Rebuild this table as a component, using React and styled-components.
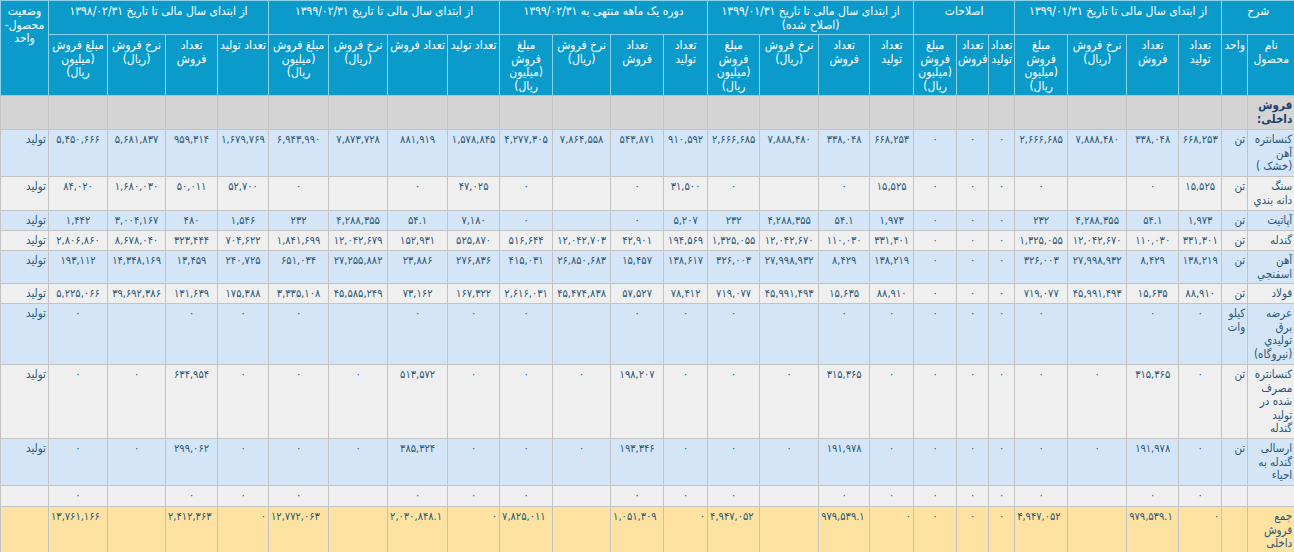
import React from 'react';
import styled, { createGlobalStyle } from 'styled-components';

const GlobalStyle = createGlobalStyle`
  body {
    margin: 0;
    background: #ffffff;
    font-family: "DejaVu Sans Condensed", "DejaVu Sans", sans-serif;
  }
`;

const colors = {
  head: '#0a9bcb',
  headLine: '#8fd2ec',
  line: '#c3c3c3',
  text: '#2b5878',
  blue: '#d3e5f6',
  gray: '#efefef',
  section: '#d4d4d4',
  total: '#fde2a2',
};

const toFa = (s) => s.replace(/\d/g, (d) => '۰۱۲۳۴۵۶۷۸۹'[d]);

const widths = [
  47, 26, 43, 52, 59, 53, 26, 32, 43, 44, 51, 59, 52, 44, 53, 58, 53, 52,
  60, 59, 60, 51, 52, 58, 59, 48,
];

const Sheet = styled.table`
  direction: rtl;
  width: 1294px;
  table-layout: fixed;
  border-collapse: collapse;
  font-size: 11px;
  line-height: 13.5px;
  color: ${colors.text};
`;

const Col = styled.col`
  width: ${(p) => p.$w}px;
`;

const HeadRow = styled.tr`
  height: ${(p) => p.$h}px;
`;

const HeadCell = styled.th`
  background: ${colors.head};
  color: #ffffff;
  font-size: 12px;
  font-weight: normal;
  text-align: center;
  vertical-align: top;
  white-space: nowrap;
  padding: 4px 0 2px;
  border: 1px solid ${colors.headLine};
`;

const Row = styled.tr`
  height: ${(p) => p.$h}px;
  background: ${(p) =>
    ({ blue: colors.blue, gray: colors.gray, section: colors.section, total: colors.total })[p.$tone]};
`;

const Cell = styled.td`
  text-align: ${(p) => p.$align || 'center'};
  vertical-align: top;
  white-space: nowrap;
  padding: 3px 2px 2px;
  border: 1px solid ${colors.line};
`;

const NameCell = styled(Cell)`
  text-align: right;
  font-size: 11.5px;
  font-weight: ${(p) => (p.$bold ? 'bold' : 'normal')};
  color: ${(p) => (p.$bold ? '#1d3f6e' : colors.text)};
`;

function Lines({ lines }) {
  return lines.map((l, i) => (
    <React.Fragment key={i}>
      {i > 0 && <br />}
      {toFa(l)}
    </React.Fragment>
  ));
}

const qty = [['تعداد', 'تولید'], ['تعداد', 'فروش']];
const rate = ['نرخ فروش', '(ریال)'];
const amount = ['مبلغ', 'فروش', '(میلیون', 'ریال)'];

const groups = [
  { title: ['شرح'], span: 2 },
  { title: ['از ابتدای سال مالی تا تاریخ 1399/01/31'], span: 4 },
  { title: ['اصلاحات'], span: 3 },
  { title: ['از ابتدای سال مالی تا تاریخ 1399/01/31', '(اصلاح شده)'], span: 4 },
  { title: ['دوره یک ماهه منتهی به 1399/02/31'], span: 4 },
  { title: ['از ابتدای سال مالی تا تاریخ 1399/02/31'], span: 4 },
  { title: ['از ابتدای سال مالی تا تاریخ 1398/02/31'], span: 4 },
];

const subHeads = [
  ['نام', 'محصول'],
  ['واحد'],
  ...qty, rate, amount,
  ...qty, amount,
  ...qty, rate, amount,
  ...qty, rate, amount,
  ['تعداد تولید'], ['تعداد فروش'], rate, ['مبلغ فروش', '(میلیون', 'ریال)'],
  ['تعداد تولید'], ['تعداد', 'فروش'], rate, ['مبلغ فروش', '(میلیون', 'ریال)'],
];

const same = (a) => [...a, '0', '0', '0', ...a];

const rows = [
  {
    name: ['کنسانتره', 'آهن', '(خشک )'], unit: ['تن'], h: 47,
    values: [
      ...same(['668,253', '338,048', '7,888,480', '2,666,685']),
      '910,592', '543,871', '7,864,558', '4,277,305',
      '1,578,845', '881,919', '7,873,728', '6,943,990',
      '1,679,769', '959,314', '5,681,837', '5,450,666',
    ],
  },
  {
    name: ['سنگ', 'دانه بندي'], unit: ['تن'], h: 34,
    values: [
      ...same(['15,525', '0', '', '0']),
      '31,500', '0', '', '0',
      '47,025', '0', '', '0',
      '52,700', '50,011', '1,680,030', '84,020',
    ],
  },
  {
    name: ['آپاتیت'], unit: ['تن'], h: 20,
    values: [
      ...same(['1,973', '54.1', '4,288,355', '232']),
      '5,207', '0', '', '0',
      '7,180', '54.1', '4,288,355', '232',
      '1,546', '480', '3,004,167', '1,442',
    ],
  },
  {
    name: ['گندله'], unit: ['تن'], h: 20,
    values: [
      ...same(['331,301', '110,030', '12,042,670', '1,325,055']),
      '194,569', '42,901', '12,042,703', '516,644',
      '525,870', '152,931', '12,042,679', '1,841,699',
      '704,622', '323,444', '8,678,040', '2,806,860',
    ],
  },
  {
    name: ['آهن', 'اسفنجي'], unit: ['تن'], h: 33,
    values: [
      ...same(['138,219', '8,429', '27,998,932', '326,003']),
      '138,617', '15,457', '26,850,683', '415,031',
      '276,836', '23,886', '27,255,882', '651,034',
      '240,725', '13,459', '14,348,169', '193,112',
    ],
  },
  {
    name: ['فولاد'], unit: ['تن'], h: 20,
    values: [
      ...same(['88,910', '15,635', '45,991,493', '719,077']),
      '78,412', '57,527', '45,474,838', '2,616,031',
      '167,322', '73,162', '45,585,249', '3,335,108',
      '175,388', '131,639', '39,692,386', '5,225,066',
    ],
  },
  {
    name: ['عرضه', 'برق', 'تولیدي', '(نیروگاه)'], unit: ['کیلو', 'وات'], h: 61,
    values: [
      ...same(['0', '0', '', '0']),
      '0', '0', '', '0',
      '0', '0', '', '0',
      '0', '0', '', '0',
    ],
  },
  {
    name: ['کنسانتره', 'مصرف', 'شده در', 'تولید', 'گندله'], unit: ['تن'], h: 74,
    values: [
      ...same(['0', '315,365', '0', '0']),
      '0', '198,207', '0', '0',
      '0', '513,572', '0', '0',
      '0', '634,954', '0', '0',
    ],
  },
  {
    name: ['ارسالی', 'گندله به', 'احیاء'], unit: ['تن'], h: 47,
    values: [
      ...same(['0', '191,978', '0', '0']),
      '0', '193,346', '0', '0',
      '0', '385,324', '0', '0',
      '0', '299,062', '0', '0',
    ],
  },
  {
    name: [], unit: [], status: '', h: 21,
    values: [
      ...same(['0', '0', '', '0']),
      '0', '0', '', '0',
      '0', '0', '', '0',
      '0', '0', '', '0',
    ],
  },
];

// total row: zeros sit on the right, amounts on the left, adjustments centred
const totals = [
  '0', '979,539.1', '', '4,947,052',
  '0', '0', '0',
  '0', '979,539.1', '', '4,947,052',
  '0', '1,051,309', '', '7,825,011',
  '0', '2,030,848.1', '', '12,772,063',
  '0', '2,412,363', '', '13,761,166',
];

const totalAlign = (v, i) => {
  if (i >= 4 && i <= 6) return 'center';
  return v === '0' ? 'right' : 'left';
};

export default function App() {
  return (
    <>
      <GlobalStyle />
      <Sheet>
        <colgroup>
          {widths.map((w, i) => (
            <Col key={i} $w={w} />
          ))}
        </colgroup>
        <thead>
          <HeadRow $h={33}>
            {groups.map((g, i) => (
              <HeadCell key={i} colSpan={g.span}>
                <Lines lines={g.title} />
              </HeadCell>
            ))}
            <HeadCell rowSpan={2}>
              <Lines lines={['وضعیت', 'محصول-', 'واحد']} />
            </HeadCell>
          </HeadRow>
          <HeadRow $h={61}>
            {subHeads.map((h, i) => (
              <HeadCell key={i}>
                <Lines lines={h} />
              </HeadCell>
            ))}
          </HeadRow>
        </thead>
        <tbody>
          <Row $tone="section" $h={34}>
            <NameCell $bold>
              <Lines lines={['فروش', 'داخلی:']} />
            </NameCell>
            {widths.slice(1).map((_, i) => (
              <Cell key={i} />
            ))}
          </Row>
          {rows.map((r, ri) => (
            <Row key={ri} $h={r.h} $tone={ri % 2 === 0 ? 'blue' : 'gray'}>
              <NameCell>
                <Lines lines={r.name} />
              </NameCell>
              <NameCell>
                <Lines lines={r.unit} />
              </NameCell>
              {r.values.map((v, i) => (
                <Cell key={i}>{toFa(v)}</Cell>
              ))}
              <NameCell>{r.status ?? 'تولید'}</NameCell>
            </Row>
          ))}
          <Row $tone="total" $h={47}>
            <NameCell>
              <Lines lines={['جمع', 'فروش', 'داخلی']} />
            </NameCell>
            <Cell />
            {totals.map((v, i) => (
              <Cell key={i} $align={totalAlign(v, i)}>
                {toFa(v)}
              </Cell>
            ))}
            <Cell />
          </Row>
        </tbody>
      </Sheet>
    </>
  );
}
